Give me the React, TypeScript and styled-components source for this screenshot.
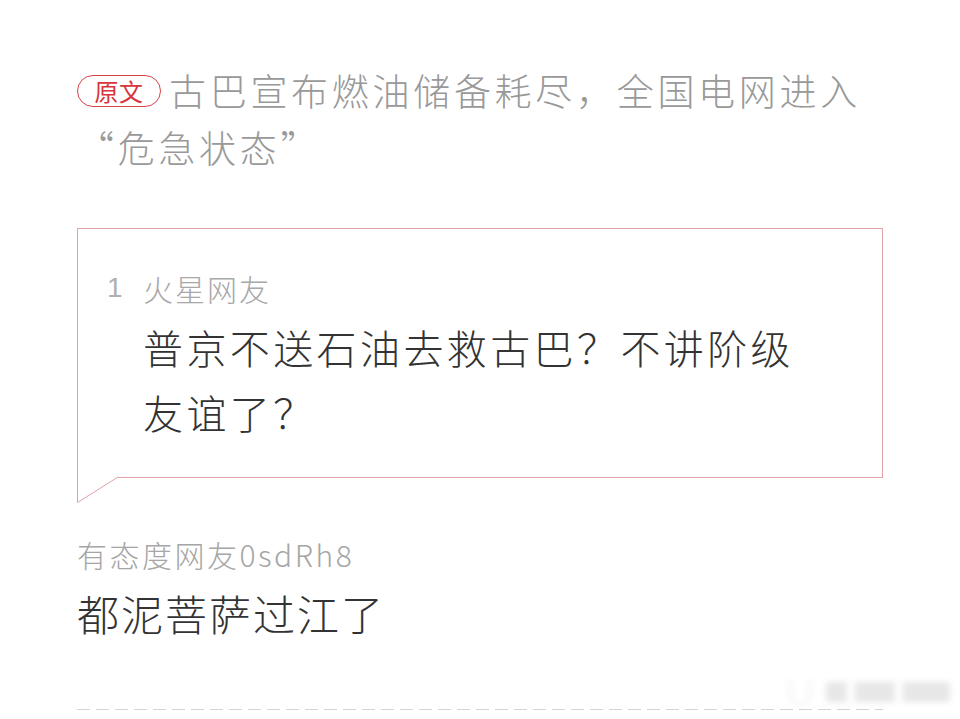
import React from "react";
import styled, { createGlobalStyle } from "styled-components";

const Global = createGlobalStyle`
  html, body { margin: 0; padding: 0; background: #ffffff; }
  body { font-family: "Noto Sans CJK SC", "Noto Sans", sans-serif; }
`;

const Page = styled.div`
  width: 960px;
  height: 719px;
  box-sizing: border-box;
  padding: 62px 77px 0 77px;
  position: relative;
  overflow: hidden;
  display: flex;
  flex-direction: column;
`;

const Title = styled.div`
  font-size: 37px;
  line-height: 57px;
  font-weight: 300;
  color: #999999;
  letter-spacing: 3.7px;
`;

const Badge = styled.span`
  display: inline-flex;
  align-items: center;
  justify-content: center;
  box-sizing: border-box;
  width: 84px;
  height: 32px;
  border: 1.5px solid #d8434a;
  border-radius: 16px;
  color: #d8343c;
  font-size: 24px;
  line-height: 28px;
  letter-spacing: 0.5px;
  font-weight: 400;
  vertical-align: 5px;
  margin-right: 8px;
`;

const Quote = styled.div`
  position: relative;
  margin-top: 52px;
  border: 1px solid #e0a4a8;
  padding: 42px 70px 32px 29px;
  display: grid;
  grid-template-columns: 36px 1fr;
  row-gap: 10px;
`;

const Tail = styled.svg`
  position: absolute;
  left: -1px;
  top: 100%;
  margin-top: -1px;
`;

const Floor = styled.span`
  font-size: 28px;
  line-height: 34px;
  color: #b0b0b0;
  font-family: "Liberation Sans", "Noto Sans CJK SC", sans-serif;
  font-weight: 300;
`;

const Name = styled.span`
  font-size: 30px;
  line-height: 34px;
  color: #a8a8a8;
  font-weight: 300;
  letter-spacing: 2px;
`;

const QuoteText = styled.div`
  grid-column: 2;
  font-size: 40px;
  line-height: 65px;
  color: #333333;
  font-weight: 300;
  letter-spacing: 3.4px;
`;

const Reply = styled.div`
  margin-top: 57px;
  display: flex;
  flex-direction: column;
  gap: 12px;
`;

const ReplyName = styled.div`
  font-size: 30px;
  line-height: 38px;
  color: #a6a6a6;
  font-weight: 300;
  letter-spacing: 2.5px;
`;

const ReplyText = styled.div`
  font-size: 42px;
  line-height: 56px;
  color: #333333;
  font-weight: 300;
  letter-spacing: 2px;
`;

const Dashes = styled.div`
  margin-top: 68px;
  height: 1px;
  width: 806px;
  background-image: linear-gradient(to right, #d4d4d4 0 13px, transparent 13px 19px);
  background-size: 19px 1px;
  background-repeat: repeat-x;
`;

const Watermark = styled.div`
  position: absolute;
  right: 10px;
  bottom: 14px;
  width: 160px;
  height: 26px;
  display: flex;
  align-items: center;
  gap: 8px;
  filter: blur(3px);
  opacity: 0.32;
`;

const MarkCircle = styled.div`
  width: 18px;
  height: 24px;
  border: 1px solid #888;
  border-radius: 0 0 9px 9px;
  border-top: none;
  margin-right: 8px;
`;

const MarkBar = styled.div<{ $w: number }>`
  width: ${(p) => p.$w}px;
  height: 20px;
  background: #b5b5b5;
`;

export default function App() {
  return (
    <>
      <Global />
      <Page>
        <Title>
          <Badge>原文</Badge>古巴宣布燃油储备耗尽，全国电网进入<wbr />“危急状态”
        </Title>
        <Quote>
          <Floor>1</Floor>
          <Name>火星网友</Name>
          <QuoteText>普京不送石油去救古巴？不讲阶级友谊了？</QuoteText>
          <Tail width="42" height="28" viewBox="0 0 42 28">
            <rect x="1" y="0" width="40" height="2" fill="#ffffff" />
            <path d="M0.5 0 L0.5 26.5 L41 1" fill="none" stroke="#e0a4a8" strokeWidth="1" />
          </Tail>
        </Quote>
        <Reply>
          <ReplyName>有态度网友0sdRh8</ReplyName>
          <ReplyText>都泥菩萨过江了</ReplyText>
        </Reply>
        <Dashes />
        <Watermark>
          <MarkCircle />
          <MarkBar $w={22} />
          <MarkBar $w={40} />
          <MarkBar $w={48} />
        </Watermark>
      </Page>
    </>
  );
}
